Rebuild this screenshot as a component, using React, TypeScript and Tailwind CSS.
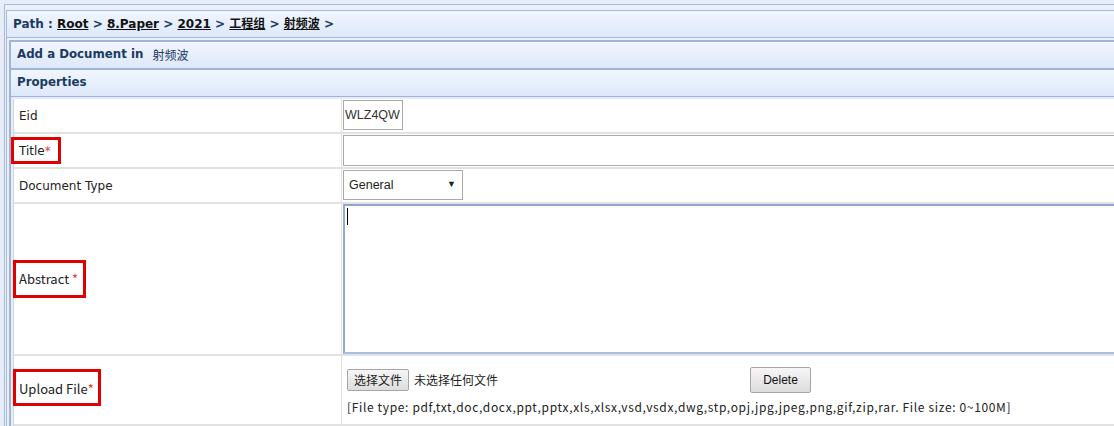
import React from "react";

const V = "font-['DejaVu_Sans','Noto_Sans_CJK_SC',sans-serif]";
const Y = "font-['Noto_Sans_CJK_SC',sans-serif]";
const A = "font-['Liberation_Sans','Noto_Sans_CJK_SC',sans-serif]";

function Star() {
  return <span className="text-[#e53935]">*</span>;
}

export default function App() {
  return (
    <div className="w-[1114px] h-[426px] overflow-hidden bg-[#e6edf8] pt-[4px] pl-[4px]">
      <div className="w-[1200px] h-full border-t border-l border-[#a7b9d6] bg-[#e9f0fa] pt-[5px] pl-[1px]">
        <div className="h-full border-l border-[#a7b9d6]">
          {/* Path header */}
          <div
            className={`h-[28px] border-t border-b border-[#a7b9d6] bg-gradient-to-b from-[#f1f6fe] to-[#dde8f9] flex items-center pl-[6px] text-[12px] font-bold text-[#1b3a63] ${V}`}
          >
            <span>Path :&nbsp;</span>
            <span className="underline text-[#111]">Root</span>
            <span>&nbsp;&gt;&nbsp;</span>
            <span className="underline text-[#111]">8.Paper</span>
            <span>&nbsp;&gt;&nbsp;</span>
            <span className="underline text-[#111]">2021</span>
            <span>&nbsp;&gt;&nbsp;</span>
            <span className="underline text-[#111]">工程组</span>
            <span>&nbsp;&gt;&nbsp;</span>
            <span className="underline text-[#111]">射频波</span>
            <span>&nbsp;&gt;</span>
          </div>
          <div className="pt-[2px] pl-[2px]">
            <div className="border-t-2 border-l-2 border-[#9fb4d6]">
              <div
                className={`h-[28px] border-b-2 border-[#9fb4d6] bg-gradient-to-b from-[#f1f6fe] to-[#dde8f9] flex items-center pl-[6px] text-[#1b3a63] ${V}`}
              >
                <span className="text-[11.8px] font-bold">Add a Document in</span>
                <span className={`ml-[9px] text-[12px] ${Y}`}>射频波</span>
              </div>
              <div
                className={`h-[27px] border-b border-[#9fb4d6] bg-gradient-to-b from-[#f1f6fe] to-[#dde8f9] flex items-center pl-[6px] text-[11.8px] font-bold text-[#1b3a63] ${V}`}
              >
                Properties
              </div>
              <div className="pt-[2px] pl-[2px] bg-[#e4ecf8]">
                <div className="bg-white border-l border-[#d6d6d6]">
                  {/* Eid */}
                  <div className="flex h-[35px] border-b-2 border-[#e2e2e2]">
                    <div className={`w-[327px] flex items-center pl-[5px] text-[12px] text-[#222] ${V}`}>Eid</div>
                    <div className="flex-1 border-l border-[#e2e2e2] pl-[1px] pt-[1px]">
                      <div
                        className={`w-[60px] h-[30px] border border-[#a9a9a9] flex items-center pl-[1px] text-[12.5px] text-[#333] ${A}`}
                      >
                        WLZ4QW
                      </div>
                    </div>
                  </div>
                  {/* Title */}
                  <div className="flex h-[35px] border-b-2 border-[#e2e2e2]">
                    <div className={`w-[327px] flex items-center pl-[5px] text-[12px] text-[#222] ${V}`}>
                      <span className="-ml-[8px] pl-[5px] pr-[7px] h-[27px] border-[3px] border-[#e00000] inline-flex items-center">
                        Title
                        <Star />
                      </span>
                    </div>
                    <div className="flex-1 border-l border-[#e2e2e2] pl-[1px] pt-[1px]">
                      <div className="w-full h-[31px] border border-[#a9a9a9]" />
                    </div>
                  </div>
                  {/* Document Type */}
                  <div className="flex h-[35px] border-b-2 border-[#e2e2e2]">
                    <div className={`w-[327px] flex items-center pl-[5px] text-[12px] text-[#222] ${V}`}>Document Type</div>
                    <div className="flex-1 border-l border-[#e2e2e2] pl-[1px] pt-[1px]">
                      <div
                        className={`w-[120px] h-[30px] border border-[#a9a9a9] bg-white flex items-center justify-between pl-[5px] pr-[6px] text-[12.5px] text-[#222] ${A}`}
                      >
                        <span>General</span>
                        <span className="text-[9px]">▼</span>
                      </div>
                    </div>
                  </div>
                  {/* Abstract */}
                  <div className="flex h-[152px] border-b-2 border-[#e2e2e2]">
                    <div className={`w-[327px] flex items-center pl-[5px] text-[13px] text-[#222] ${Y}`}>
                      <span className="-ml-[6px] pl-[3px] pr-[5px] h-[38px] border-[3px] border-[#e00000] inline-flex items-center">
                        Abstract&nbsp;
                        <Star />
                      </span>
                    </div>
                    <div className="flex-1 border-l border-[#e2e2e2] pl-[1px]">
                      <div className="w-full h-[150px] border-2 border-[#a9bde0] border-t-[#8fa6d2] border-l-[#93aad4] pt-[2px] pl-[2px]">
                        <div className="w-[1px] h-[17px] bg-black" />
                      </div>
                    </div>
                  </div>
                  {/* Upload File */}
                  <div className="flex h-[70px] border-b-2 border-[#e2e2e2]">
                    <div className={`w-[327px] flex items-center pl-[5px] text-[13px] text-[#222] ${Y}`}>
                      <span className="-ml-[6px] pl-[3px] pr-[4px] h-[37px] mt-[-6px] border-[3px] border-[#e00000] inline-flex items-center pt-[4px]">
                        Upload File
                        <Star />
                      </span>
                    </div>
                    <div className="flex-1 border-l border-[#e2e2e2] pl-[5px] pt-[11px]">
                      <div className="flex items-center h-[26px]">
                        <div
                          className={`w-[62px] h-[22px] border border-[#a6a6a6] rounded-[2px] bg-gradient-to-b from-[#f6f6f6] to-[#dddddd] flex items-center justify-center text-[12px] text-[#222] ${Y}`}
                        >
                          选择文件
                        </div>
                        <span className={`ml-[5px] text-[12px] text-[#222] ${Y}`}>未选择任何文件</span>
                        <div
                          className={`ml-[252px] w-[61px] h-[26px] border border-[#a6a6a6] rounded-[2px] bg-gradient-to-b from-[#f6f6f6] to-[#dddddd] flex items-center justify-center text-[12px] text-[#111] ${A}`}
                        >
                          Delete
                        </div>
                      </div>
                      <div className={`mt-[5px] text-[12px] tracking-[0.65px] text-[#222] whitespace-nowrap ${Y}`}>
                        [File type: pdf,txt,doc,docx,ppt,pptx,xls,xlsx,vsd,vsdx,dwg,stp,opj,jpg,jpeg,png,gif,zip,rar. File size: 0~100M]
                      </div>
                    </div>
                  </div>
                </div>
              </div>
            </div>
          </div>
        </div>
      </div>
    </div>
  );
}
